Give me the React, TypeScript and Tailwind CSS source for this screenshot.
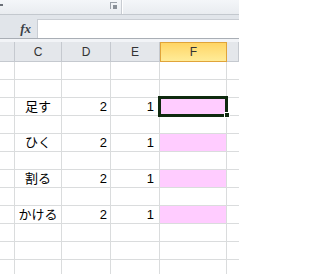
const cols = ["", "C", "D", "E", "F", ""]

const rows: { label?: string; d?: string; e?: string; pink?: boolean; selected?: boolean }[] = [
  {},
  {},
  { label: "足す", d: "2", e: "1", pink: true, selected: true },
  {},
  { label: "ひく", d: "2", e: "1", pink: true },
  {},
  { label: "割る", d: "2", e: "1", pink: true },
  {},
  { label: "かける", d: "2", e: "1", pink: true },
  {},
  {},
  {},
]

const gridCols = "grid grid-cols-[15px_47px_49px_49px_67px_1fr]"

export default function App() {
  return (
    <div className="w-[239px] h-[274px] overflow-hidden bg-white font-['Liberation_Sans','Noto_Sans_CJK_JP',sans-serif]">
      {/* ribbon strip */}
      <div className="relative h-[15px] bg-gradient-to-b from-[#f4f6f9] to-[#e9ecf0] border-b border-[#c3c8ce]">
        <div className="absolute left-0 top-[4px] w-[3px] h-[2px] bg-[#6b7078]" />
        <div className="absolute left-[110px] top-[2px] w-[7px] h-[7px] border-l border-t border-[#9aa0a8]">
          <div className="absolute right-0 bottom-0 w-[4px] h-[4px] bg-[#8a9098]" />
        </div>
        <div className="absolute left-[121px] top-0 h-[14px] w-[2px] border-l border-r border-l-[#c8ccd2] border-r-white" />
      </div>
      <div className="h-[4px] bg-[#e1e5ea]" />

      {/* formula bar */}
      <div className="flex h-[19px] bg-[#e1e5ea]">
        <div className="w-[37px] flex items-center justify-end pr-[6px]">
          <span className="font-['Liberation_Serif',serif] italic font-bold text-[13px] leading-none text-[#3a3f46]">fx</span>
        </div>
        <div className="flex-1 bg-white border-t border-l border-[#c9cdd3]" />
      </div>
      <div className="h-[1px] bg-[#a9aeb5]" />
      <div className="h-[3px] bg-[#f2f4f7]" />

      {/* column headers */}
      <div className={`${gridCols} h-[20px] bg-[#e4e7eb]`}>
        {cols.map((c, i) =>
          c === "F" ? (
            <div
              key={i}
              className="flex items-center justify-center border border-[#e0a43a] bg-gradient-to-b from-[#ffd564] to-[#ffec98] text-[12px] text-[#333]"
            >
              {c}
            </div>
          ) : (
            <div
              key={i}
              className="flex items-center justify-center border-r border-b border-[#c5c9cf] text-[12px] text-[#333]"
            >
              {c}
            </div>
          )
        )}
      </div>

      {/* cells */}
      {rows.map((r, ri) => (
        <div key={ri} className={`${gridCols} h-[18px] text-[13px] text-black`}>
          <div className="border-r border-b border-[#dadcdd]" />
          <div className="flex items-end justify-center pb-[1px] border-r border-b border-[#dadcdd] whitespace-nowrap leading-[15px]">
            {r.label}
          </div>
          <div className="flex items-end justify-end pb-[1px] pr-[3px] border-r border-b border-[#dadcdd] leading-[15px]">
            {r.d}
          </div>
          <div className="flex items-end justify-end pb-[1px] pr-[5px] border-r border-b border-[#dadcdd] leading-[15px]">
            {r.e}
          </div>
          <div className={`relative border-r border-b border-[#dadcdd] ${r.pink ? "bg-[#ffccff]" : ""}`}>
            {r.selected && (
              <>
                <div className="absolute left-[-2px] top-[-2px] w-[70px] h-[21px] border-[3px] border-[#0f2a0f] z-10" />
                <div className="absolute left-[64px] top-[14px] w-[6px] h-[6px] bg-[#0f2a0f] border border-white z-20" />
              </>
            )}
          </div>
          <div className="border-b border-[#dadcdd]" />
        </div>
      ))}
    </div>
  )
}
